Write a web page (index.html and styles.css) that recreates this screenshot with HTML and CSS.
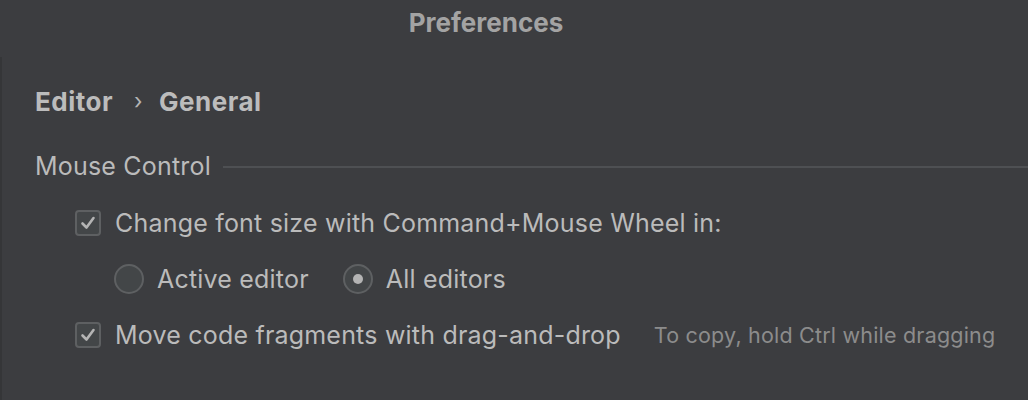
FILE: index.html
```html
<!DOCTYPE html>
<html>
<head>
<meta charset="utf-8">
<link rel="stylesheet" href="styles.css">
</head>
<body>
<div class="window">
  <header class="titlebar">Preferences</header>
  <main class="content">
    <div class="breadcrumb">
      <span>Editor</span>
      <span class="sep">›</span>
      <span>General</span>
    </div>
    <div class="section-title">
      <span>Mouse Control</span>
      <span class="rule"></span>
    </div>
    <div class="row indent1">
      <span class="checkbox checked">
        <svg viewBox="0 0 26 26" width="26" height="26"><path d="M7.5 13.5 L11.5 17.5 L18.5 8" fill="none" stroke="#b4b4b4" stroke-width="2.6" stroke-linecap="round" stroke-linejoin="round"/></svg>
      </span>
      <span class="label">Change font size with Command+Mouse Wheel in:</span>
    </div>
    <div class="row indent2">
      <span class="radio"></span>
      <span class="label">Active editor</span>
      <span class="radio selected"></span>
      <span class="label">All editors</span>
    </div>
    <div class="row indent1">
      <span class="checkbox checked">
        <svg viewBox="0 0 26 26" width="26" height="26"><path d="M7.5 13.5 L11.5 17.5 L18.5 8" fill="none" stroke="#b4b4b4" stroke-width="2.6" stroke-linecap="round" stroke-linejoin="round"/></svg>
      </span>
      <span class="label">Move code fragments with drag-and-drop</span>
      <span class="hint">To copy, hold Ctrl while dragging</span>
    </div>
  </main>
</div>
</body>
</html>
```
FILE: styles.css
```css
html, body {
  margin: 0;
  padding: 0;
  background: #3c3d40;
  width: 1028px;
  height: 400px;
  overflow: hidden;
  font-family: Inter, "Open Sans", sans-serif;
}
.window {
  display: flex;
  flex-direction: column;
  height: 400px;
}
.titlebar {
  height: 57px;
  box-sizing: border-box;
  padding-top: 8px;
  padding-right: 56px;
  text-align: center;
  font-weight: 700;
  font-size: 26px;
  line-height: 30px;
  color: #a3a3a3;
}
.content {
  flex: 1;
  border-left: 2px solid #353638;
  padding-left: 33px;
}
.breadcrumb {
  display: flex;
  align-items: center;
  height: 30px;
  margin-top: 29px;
  font-weight: 700;
  font-size: 26px;
  letter-spacing: 0.5px;
  color: #bcbcbc;
}
.breadcrumb .sep {
  font-weight: 400;
  margin: 0 16px 0 21px;
  font-size: 22px;
  color: #b5b5b5;
}
.section-title {
  display: flex;
  align-items: center;
  margin-top: 35px;
  height: 30px;
  font-size: 25px;
  letter-spacing: 0.2px;
  color: #bbbbbb;
}
.section-title .rule {
  flex: 1;
  height: 2px;
  background: #4e5053;
  margin-left: 12px;
  margin-top: 2px;
}
.row {
  display: flex;
  align-items: center;
  height: 56px;
  font-size: 25px;
  letter-spacing: 0.2px;
  color: #bbbbbb;
}
.indent1 { padding-left: 40px; }
.indent2 { padding-left: 79px; }
.section-title + .row { margin-top: 14px; }
.checkbox {
  width: 26px;
  height: 26px;
  box-sizing: border-box;
  border: 2px solid #5e6062;
  border-radius: 4px;
  background: #434648;
  display: flex;
  align-items: center;
  justify-content: center;
  margin-right: 14px;
  flex: none;
}
.checkbox svg { flex: none; margin: -2px; }
.radio {
  width: 30px;
  height: 30px;
  box-sizing: border-box;
  border: 2px solid #5e6062;
  border-radius: 50%;
  background: #434648;
  margin-right: 13px;
  flex: none;
  display: flex;
  align-items: center;
  justify-content: center;
}
.radio.selected::after {
  content: "";
  width: 10px;
  height: 10px;
  border-radius: 50%;
  background: #b4b4b4;
}
.label + .radio { margin-left: 34px; }
.hint {
  margin-left: 33px;
  font-size: 21.5px;
  color: #8c8c8c;
}
```
